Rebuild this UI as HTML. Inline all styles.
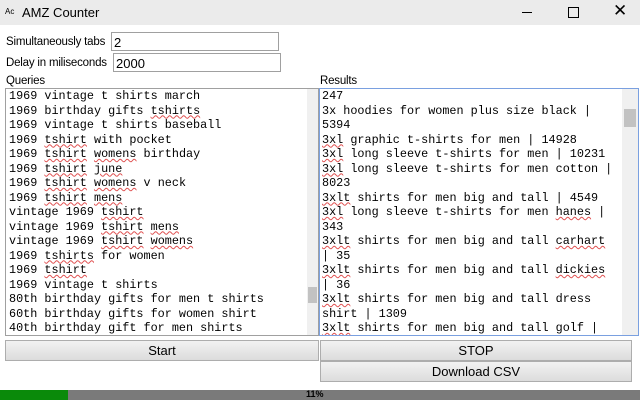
<!DOCTYPE html>
<html><head><style>
body{margin:0;width:640px;height:400px;overflow:hidden;background:#fff;font-family:"Liberation Sans",sans-serif;position:relative}
.a{position:absolute}
.t{font-size:11.5px;color:#000;letter-spacing:-0.2px}
.in{border:1px solid #a0a0a0;height:19px;font-size:13px;line-height:19px;padding-left:2px;box-sizing:border-box}
.ta{border:1px solid #a0a0a0;box-sizing:border-box;overflow:hidden;font-family:"Liberation Mono",monospace;font-size:11.8px;line-height:14.5px;color:#000;white-space:pre}
.sb{position:absolute;right:0;top:0;bottom:0;width:11px;background:#f0f0f0}
.btn{border:1px solid #adadad;background:linear-gradient(#f2f2f2,#dcdcdc);box-sizing:border-box;text-align:center;font-size:13px;line-height:19px}
u{text-decoration:underline wavy #e05050;text-decoration-thickness:1px}
</style></head><body>
<div class="a" style="left:0;top:0;width:640px;height:25px;background:#ebebeb"></div>
<div class="a" style="left:5px;top:7px;font-size:8px">Ac</div>
<div class="a" style="left:22px;top:5px;font-size:13px">AMZ Counter</div>
<div class="a" style="left:522px;top:12px;width:10px;height:1px;background:#000"></div>
<div class="a" style="left:568px;top:7px;width:9px;height:9px;border:1px solid #000"></div>
<div class="a" style="left:613px;top:1px;font-size:17px">✕</div>
<div class="a t" style="left:6px;top:36px">Simultaneously tabs</div>
<div class="a in" style="left:111px;top:32px;width:168px">2</div>
<div class="a t" style="left:6px;top:57px">Delay in miliseconds</div>
<div class="a in" style="left:113px;top:53px;width:168px">2000</div>
<div class="a t" style="left:6px;top:75px">Queries</div>
<div class="a t" style="left:320px;top:75px">Results</div>
<div class="a ta" style="left:5px;top:88px;width:314px;height:248px;padding:0 0 0 3px">1969 vintage t shirts march
1969 birthday gifts <u>tshirts</u>
1969 vintage t shirts baseball
1969 <u>tshirt</u> with pocket
1969 <u>tshirt</u> <u>womens</u> birthday
1969 <u>tshirt</u> <u>june</u>
1969 <u>tshirt</u> <u>womens</u> v neck
1969 <u>tshirt</u> <u>mens</u>
vintage 1969 <u>tshirt</u>
vintage 1969 <u>tshirt</u> <u>mens</u>
vintage 1969 <u>tshirt</u> <u>womens</u>
1969 <u>tshirts</u> for women
1969 <u>tshirt</u>
1969 vintage t shirts
80th birthday gifts for men t shirts
60th birthday gifts for women shirt
40th birthday gift for men shirts<div class="sb"><div class="a" style="left:1px;top:198px;width:9px;height:16px;background:#c2c2c2"></div></div></div>
<div class="a ta" style="left:319px;top:88px;width:320px;height:248px;padding:0 0 0 2px;border-color:#7aa0e0">247
3x hoodies for women plus size black |
5394
<u>3xl</u> graphic t-shirts for men | 14928
<u>3xl</u> long sleeve t-shirts for men | 10231
<u>3xl</u> long sleeve t-shirts for men cotton |
8023
<u>3xlt</u> shirts for men big and tall | 4549
<u>3xl</u> long sleeve t-shirts for men <u>hanes</u> |
343
<u>3xlt</u> shirts for men big and tall <u>carhart</u>
| 35
<u>3xlt</u> shirts for men big and tall <u>dickies</u>
| 36
<u>3xlt</u> shirts for men big and tall dress
shirt | 1309
<u>3xlt</u> shirts for men big and tall golf |<div class="sb" style="width:16px"><div class="a" style="left:2px;top:20px;width:12px;height:18px;background:#c2c2c2"></div></div></div>
<div class="a btn" style="left:5px;top:340px;width:314px;height:21px">Start</div>
<div class="a btn" style="left:320px;top:340px;width:312px;height:21px">STOP</div>
<div class="a btn" style="left:320px;top:361px;width:312px;height:21px">Download CSV</div>
<div class="a" style="left:0;top:390px;width:640px;height:10px;background:#7a7a7a"></div>
<div class="a" style="left:0;top:390px;width:68px;height:10px;background:#0a8a0a"></div>
<div class="a" style="left:306px;top:389px;font-size:9px;font-weight:bold;color:#000">11%</div>
</body></html>
